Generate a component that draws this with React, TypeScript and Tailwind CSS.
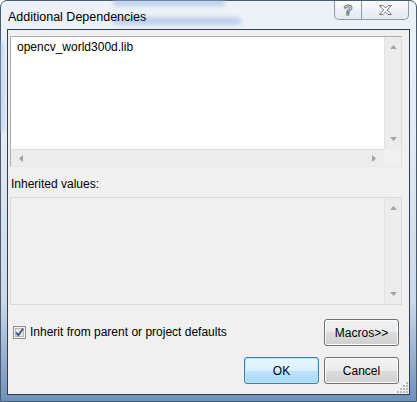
import React from "react";

const btn =
  "flex items-center justify-center w-[75px] h-[27px] rounded-[3px] border border-[#707070] shadow-[inset_0_0_0_1px_#fcfcfc] bg-[linear-gradient(180deg,#f2f2f2_0%,#ebebeb_50%,#dddddd_50%,#cfcfcf_100%)] text-[12px] text-black";

function Arrow({ dir }: { dir: "up" | "down" | "left" | "right" }) {
  const pts = {
    up: "0,4 3.5,0 7,4",
    down: "0,0 3.5,4 7,0",
    left: "4,0 0,3.5 4,7",
    right: "0,0 4,3.5 0,7",
  }[dir];
  const vertical = dir === "up" || dir === "down";
  return (
    <svg width={vertical ? 7 : 4} height={vertical ? 4 : 7}>
      <polygon points={pts} fill="#a3a3a3" />
    </svg>
  );
}

function VScroll({ height }: { height: string }) {
  return (
    <div
      className={`flex flex-col items-center justify-between w-[17px] ${height} bg-[#ececec] border-l border-[#e2e2e2] py-[8px]`}
    >
      <Arrow dir="up" />
      <Arrow dir="down" />
    </div>
  );
}

function CaptionButtons() {
  return (
    <div className="flex h-[19px] border border-t-0 border-[#8c99a8] rounded-b-[5px] overflow-hidden bg-[linear-gradient(180deg,#fbfcfd_0%,#eef2f7_50%,#e3e9f0_100%)]">
      <div className="flex items-center justify-center w-[27px] border-r border-[#8c99a8]">
        <svg width="12" height="16">
          <text
            x="6"
            y="13"
            textAnchor="middle"
            fontFamily="Liberation Sans, sans-serif"
            fontWeight="bold"
            fontSize="15"
            fill="#ffffff"
            stroke="#6d7986"
            strokeWidth="1"
          >
            ?
          </text>
        </svg>
      </div>
      <div className="flex items-center justify-center w-[46px]">
        <svg width="15" height="12">
          <path
            d="M1.5,1.5 h3.5 l2.5,2.5 l2.5,-2.5 h3.5 l-4.2,4.5 l4.2,4.5 h-3.5 l-2.5,-2.5 l-2.5,2.5 h-3.5 l4.2,-4.5 z"
            fill="#ffffff"
            stroke="#6d7986"
            strokeWidth="1"
          />
        </svg>
      </div>
    </div>
  );
}

function Checkbox() {
  return (
    <svg width="13" height="13">
      <rect x="0.5" y="0.5" width="12" height="12" fill="#f4f4f4" stroke="#8e8f8f" />
      <rect x="2.5" y="2.5" width="8" height="8" fill="#e6e6e6" stroke="#b9b9b9" />
      <path d="M3,6.5 L5.3,9.3 L10,2.8" fill="none" stroke="#3c4f8a" strokeWidth="1.8" />
    </svg>
  );
}

export default function App() {
  return (
    <div
      className="relative w-[417px] h-[402px] overflow-hidden bg-white text-[12px] text-black"
      style={{ fontFamily: '"Liberation Sans", Arial, sans-serif' }}
    >
      <div className="relative flex flex-col w-full h-full rounded-t-[7px] border border-[#4b5b6e] bg-[linear-gradient(180deg,#eef3f9_0%,#e2eaf3_35%,#cbd9e9_75%,#6f90bd_100%)] px-[6px] pb-[6px]">
        {/* blurred glass background */}
        <div className="absolute left-[112px] top-[-2px] w-[112px] h-[7px] rounded-full bg-[#9dbde6] opacity-60 blur-[2px]" />
        <div className="absolute left-[112px] top-[16px] w-[128px] h-[8px] rounded-full bg-[#9dbde6] opacity-60 blur-[2px]" />
        <div className="absolute left-[-2px] top-[40px] w-[5px] h-[90px] rounded-full bg-[#9dbde6] opacity-50 blur-[2px]" />

        {/* title bar */}
        <div className="relative flex items-start h-[28px]">
          <span className="pt-[7px] pl-[1px] text-[12.5px] text-black">Additional Dependencies</span>
          <div className="ml-auto mr-[1px]">
            <CaptionButtons />
          </div>
        </div>

        {/* client */}
        <div className="relative flex-1 border border-[#2f3e52] bg-[#f0f0f0]">
          <div className="flex flex-col pl-[2px] pt-[6px]">
            {/* editable list */}
            <div className="flex flex-col w-[392px] h-[131px] border border-[#abadb3] border-r-[#dbdfe6] border-b-[#e3e9ef] bg-white">
              <div className="flex flex-1">
                <div className="flex-1 pl-[6px] pt-[2px] leading-[16px]">opencv_world300d.lib</div>
                <VScroll height="h-[112px]" />
              </div>
              <div className="flex h-[17px]">
                <div className="flex flex-1 items-center justify-between px-[8px] bg-[#ececec] border-t border-[#e2e2e2]">
                  <Arrow dir="left" />
                  <Arrow dir="right" />
                </div>
                <div className="w-[17px] bg-[#f0f0f0]" />
              </div>
            </div>

            <div className="mt-[9px] pl-[1px] leading-[16px]">Inherited values:</div>

            {/* inherited values */}
            <div className="flex mt-[5px] w-[392px] h-[108px] border border-[#d9d9d9] bg-[#f0f0f0]">
              <div className="flex-1" />
              <VScroll height="h-[106px]" />
            </div>
          </div>

          {/* bottom area */}
          <div className="flex items-start justify-between mt-[14px] pl-[5px] pr-[10px]">
            <div className="flex items-center gap-[4px] mt-[6px]">
              <Checkbox />
              <span className="leading-[14px]">Inherit from parent or project defaults</span>
            </div>
            <div className={btn}>Macros&gt;&gt;</div>
          </div>
          <div className="flex justify-end gap-[5px] mt-[11px] pr-[10px]">
            <div className="flex items-center justify-center w-[75px] h-[27px] rounded-[3px] border border-[#3c7fb1] shadow-[inset_0_0_0_1px_#bfe3f8] bg-[linear-gradient(180deg,#eaf6fd_0%,#d9f0fc_50%,#bee6fd_50%,#a7d9f5_100%)] text-[12px]">
              OK
            </div>
            <div className={btn}>Cancel</div>
          </div>

          {/* size grip */}
          <svg className="absolute right-[1px] bottom-[1px]" width="11" height="11">
            {[
              [9, 1], [9, 4], [6, 4], [9, 7], [6, 7], [3, 7], [9, 10], [6, 10], [3, 10], [0, 10],
            ].map(([x, y], i) => (
              <rect key={i} x={x} y={y - 1} width="2" height="2" fill="#b8b8b8" />
            ))}
          </svg>
        </div>
      </div>
    </div>
  );
}
